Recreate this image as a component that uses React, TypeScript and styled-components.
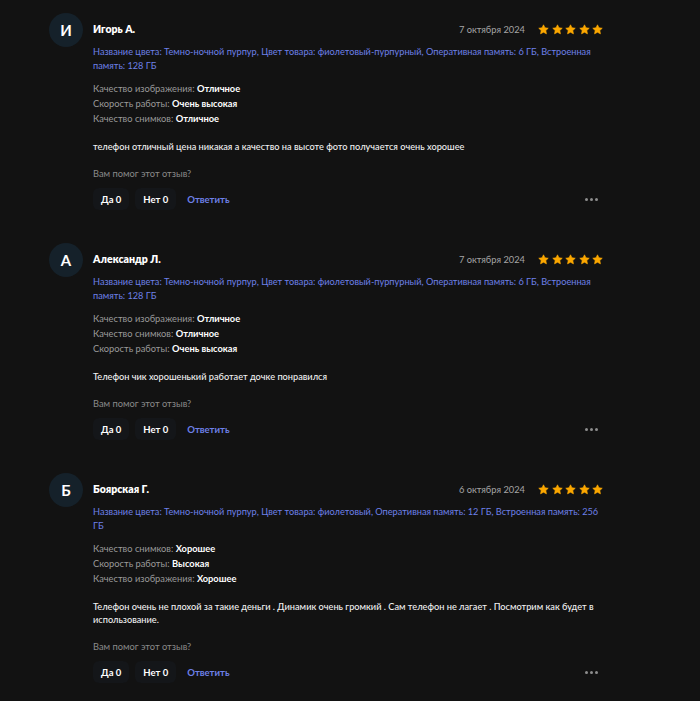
import React from 'react';
import styled, { createGlobalStyle } from 'styled-components';

interface Spec {
  label: string;
  value: string;
}

interface Review {
  initial: string;
  name: string;
  date: string;
  variant: string;
  specs: Spec[];
  text: string;
  yes: number;
  no: number;
}

const reviews: Review[] = [
  {
    initial: 'И',
    name: 'Игорь А.',
    date: '7 октября 2024',
    variant:
      'Название цвета: Темно-ночной пурпур, Цвет товара: фиолетовый-пурпурный, Оперативная память: 6 ГБ, Встроенная память: 128 ГБ',
    specs: [
      { label: 'Качество изображения', value: 'Отличное' },
      { label: 'Скорость работы', value: 'Очень высокая' },
      { label: 'Качество снимков', value: 'Отличное' },
    ],
    text: 'телефон отличный цена никакая а качество на высоте фото получается очень хорошее',
    yes: 0,
    no: 0,
  },
  {
    initial: 'А',
    name: 'Александр Л.',
    date: '7 октября 2024',
    variant:
      'Название цвета: Темно-ночной пурпур, Цвет товара: фиолетовый-пурпурный, Оперативная память: 6 ГБ, Встроенная память: 128 ГБ',
    specs: [
      { label: 'Качество изображения', value: 'Отличное' },
      { label: 'Качество снимков', value: 'Отличное' },
      { label: 'Скорость работы', value: 'Очень высокая' },
    ],
    text: 'Телефон чик хорошенький работает дочке понравился',
    yes: 0,
    no: 0,
  },
  {
    initial: 'Б',
    name: 'Боярская Г.',
    date: '6 октября 2024',
    variant:
      'Название цвета: Темно-ночной пурпур, Цвет товара: фиолетовый, Оперативная память: 12 ГБ, Встроенная память: 256 ГБ',
    specs: [
      { label: 'Качество снимков', value: 'Хорошее' },
      { label: 'Скорость работы', value: 'Высокая' },
      { label: 'Качество изображения', value: 'Хорошее' },
    ],
    text: 'Телефон очень не плохой за такие деньги . Динамик очень громкий . Сам телефон не лагает . Посмотрим как будет в использование.',
    yes: 0,
    no: 0,
  },
];

const GlobalStyle = createGlobalStyle`
  html, body {
    margin: 0;
    padding: 0;
    background: #121212;
  }
  body {
    font-family: Lato, "Noto Sans", sans-serif;
    color: #fff;
  }
`;

const Page = styled.div`
  min-height: 701px;
  padding: 13px 0 0 49px;
  box-sizing: border-box;
`;

const List = styled.div`
  width: 554px;
  display: flex;
  flex-direction: column;
  gap: 33px;
`;

const Item = styled.div`
  display: flex;
  gap: 10px;
`;

const Avatar = styled.div`
  width: 34px;
  height: 34px;
  flex-shrink: 0;
  border-radius: 50%;
  background: #15212a;
  display: flex;
  align-items: center;
  justify-content: center;
  font-size: 15px;
  font-weight: 700;
  color: #fff;
`;

const Body = styled.div`
  flex: 1;
  min-width: 0;
`;

const Header = styled.div`
  height: 32px;
  display: flex;
  align-items: center;
  justify-content: space-between;
`;

const Name = styled.div`
  font-size: 10.5px;
  font-weight: 800;
`;

const Meta = styled.div`
  display: flex;
  align-items: center;
  gap: 13px;
`;

const DateText = styled.span`
  font-size: 9.3px;
  color: #a5a5a5;
`;

const Stars = styled.div`
  display: flex;
  gap: 2.5px;
`;

const Variant = styled.div`
  font-size: 9.2px;
  line-height: 14px;
  color: #6d80e8;
`;

const Specs = styled.div`
  margin-top: 8px;
  font-size: 9.3px;
  line-height: 15px;
`;

const Label = styled.span`
  color: #9a9a9a;
`;

const Value = styled.span`
  color: #fff;
  font-weight: 700;
`;

const Comment = styled.div`
  margin-top: 14px;
  font-size: 9.2px;
  line-height: 13px;
  color: #f0f0f0;
  font-weight: 500;
`;

const Question = styled.div`
  margin-top: 14px;
  font-size: 9.3px;
  line-height: 14px;
  color: #8a8a8a;
`;

const Actions = styled.div`
  margin-top: 7px;
  display: flex;
  align-items: center;
  gap: 6px;
`;

const Vote = styled.button`
  height: 22px;
  padding: 0 8px;
  border: none;
  border-radius: 6px;
  background: #141619;
  color: #fff;
  font-family: inherit;
  font-size: 9.5px;
  font-weight: 700;
  cursor: pointer;
`;

const Reply = styled.a`
  padding: 0 5px;
  font-size: 9.5px;
  font-weight: 700;
  color: #6d80e8;
  cursor: pointer;
`;

const More = styled.div`
  margin-left: auto;
  margin-right: 5px;
  display: flex;
  gap: 2px;
`;

const Dot = styled.span`
  width: 3px;
  height: 3px;
  border-radius: 50%;
  background: #8d8d8d;
`;

const Star: React.FC = () => (
  <svg width="11" height="11" viewBox="0 0 24 24">
    <path
      d="M12 1.8l3.1 6.6 7.2.9-5.3 5 1.4 7.1L12 17.9l-6.4 3.5 1.4-7.1-5.3-5 7.2-.9z"
      fill="#fba700"
      stroke="#fba700"
      strokeWidth="1.5"
      strokeLinejoin="round"
    />
  </svg>
);

const ReviewItem: React.FC<{ review: Review }> = ({ review }) => (
  <Item>
    <Avatar>{review.initial}</Avatar>
    <Body>
      <Header>
        <Name>{review.name}</Name>
        <Meta>
          <DateText>{review.date}</DateText>
          <Stars>
            {[0, 1, 2, 3, 4].map((i) => (
              <Star key={i} />
            ))}
          </Stars>
        </Meta>
      </Header>
      <Variant>{review.variant}</Variant>
      <Specs>
        {review.specs.map((s) => (
          <div key={s.label}>
            <Label>{s.label}: </Label>
            <Value>{s.value}</Value>
          </div>
        ))}
      </Specs>
      <Comment>{review.text}</Comment>
      <Question>Вам помог этот отзыв?</Question>
      <Actions>
        <Vote>Да {review.yes}</Vote>
        <Vote>Нет {review.no}</Vote>
        <Reply>Ответить</Reply>
        <More>
          <Dot />
          <Dot />
          <Dot />
        </More>
      </Actions>
    </Body>
  </Item>
);

const App: React.FC = () => (
  <>
    <GlobalStyle />
    <Page>
      <List>
        {reviews.map((r) => (
          <ReviewItem key={r.name} review={r} />
        ))}
      </List>
    </Page>
  </>
);

export default App;
